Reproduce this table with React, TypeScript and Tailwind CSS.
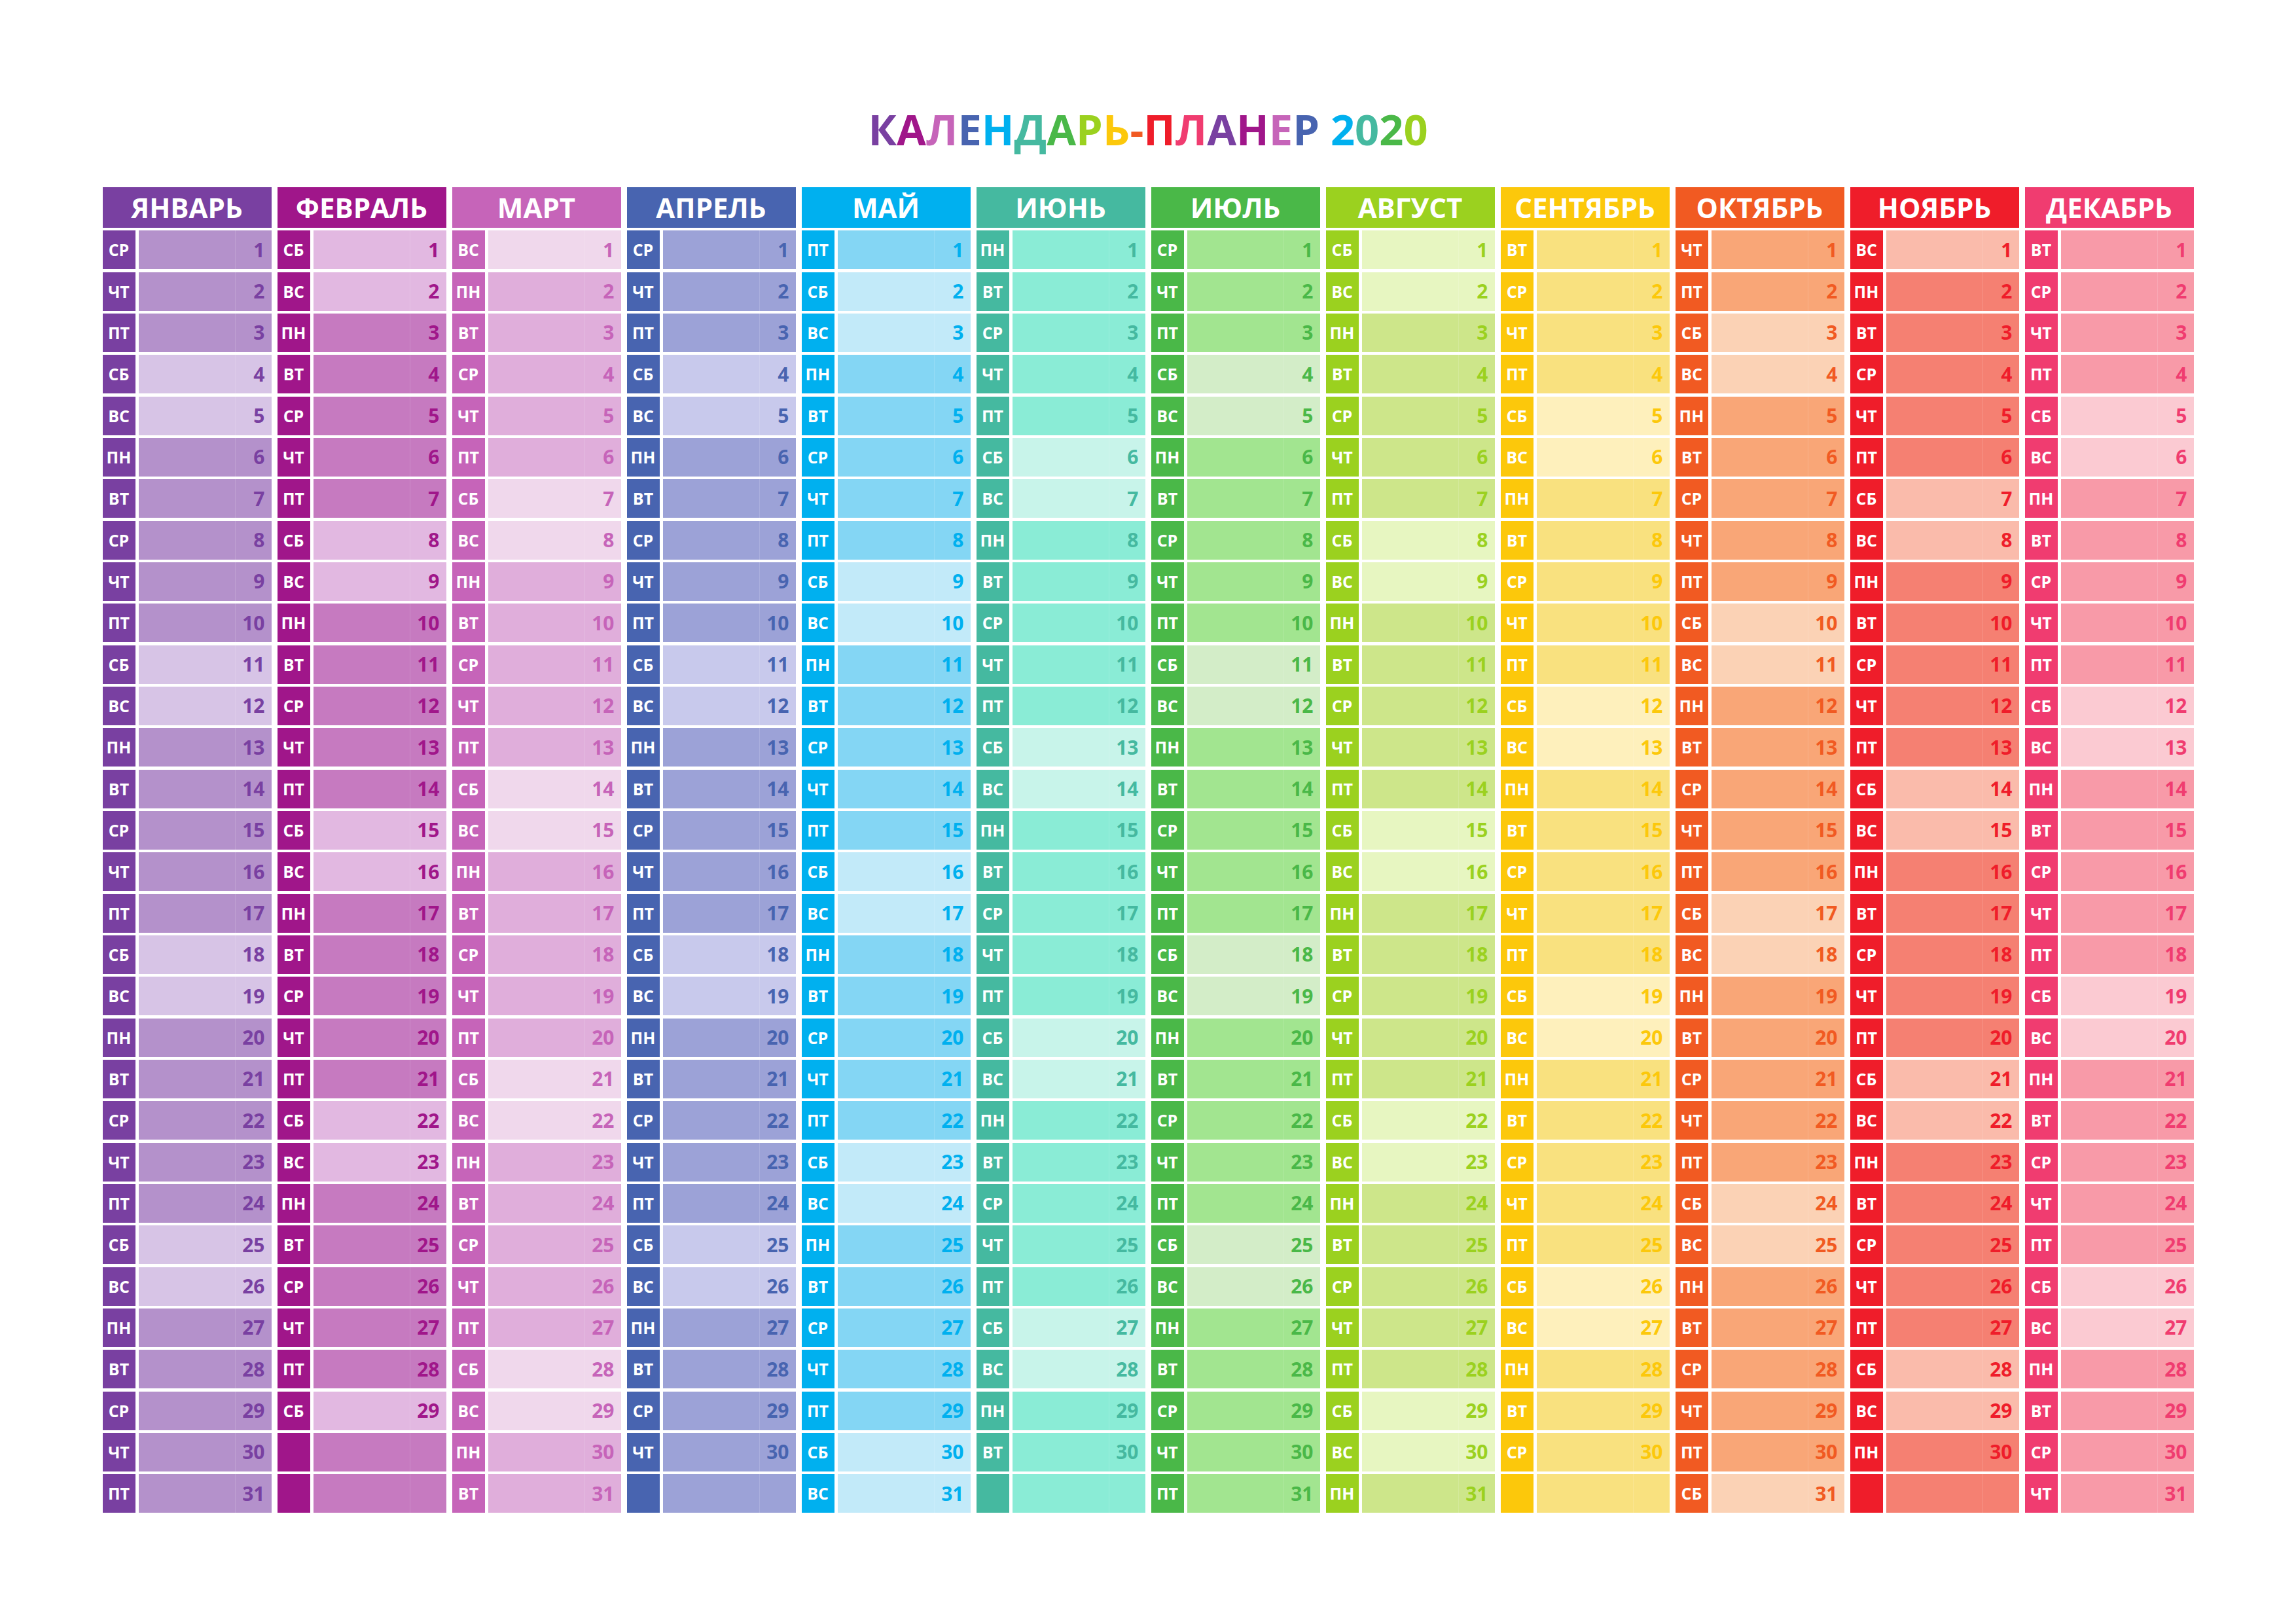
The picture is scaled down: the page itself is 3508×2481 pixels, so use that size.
import React from "react";

type MonthStyle = {
  name: string;
  dark: string;
  text: string;
  wk: string;
  we: string;
};

const MONTHS: MonthStyle[] = [
  { name: "ЯНВАРЬ", dark: "bg-[#7940a1]", text: "text-[#7940a1]", wk: "bg-[#b491cb]", we: "bg-[#d7c4e6]" },
  { name: "ФЕВРАЛЬ", dark: "bg-[#a0168a]", text: "text-[#a0168a]", wk: "bg-[#c67ac0]", we: "bg-[#e2b8e1]" },
  { name: "МАРТ", dark: "bg-[#c664b9]", text: "text-[#c664b9]", wk: "bg-[#e0aedb]", we: "bg-[#f0d8ec]" },
  { name: "АПРЕЛЬ", dark: "bg-[#4864b0]", text: "text-[#4864b0]", wk: "bg-[#9ca2d7]", we: "bg-[#c8c9ec]" },
  { name: "МАЙ", dark: "bg-[#00b0ef]", text: "text-[#00b0ef]", wk: "bg-[#84d6f4]", we: "bg-[#c2eaf9]" },
  { name: "ИЮНЬ", dark: "bg-[#45b9a0]", text: "text-[#45b9a0]", wk: "bg-[#8aecd6]", we: "bg-[#c8f4ea]" },
  { name: "ИЮЛЬ", dark: "bg-[#4ab848]", text: "text-[#4ab848]", wk: "bg-[#a2e590]", we: "bg-[#d3edc8]" },
  { name: "АВГУСТ", dark: "bg-[#9bd11f]", text: "text-[#9bd11f]", wk: "bg-[#cde68a]", we: "bg-[#e7f6c1]" },
  { name: "СЕНТЯБРЬ", dark: "bg-[#fcc80b]", text: "text-[#fcc80b]", wk: "bg-[#f9e17f]", we: "bg-[#fef0bc]" },
  { name: "ОКТЯБРЬ", dark: "bg-[#f15a22]", text: "text-[#f15a22]", wk: "bg-[#f9a677]", we: "bg-[#fbd2b5]" },
  { name: "НОЯБРЬ", dark: "bg-[#ef1d2a]", text: "text-[#ef1d2a]", wk: "bg-[#f58072]", we: "bg-[#fabbab]" },
  { name: "ДЕКАБРЬ", dark: "bg-[#f03c70]", text: "text-[#f03c70]", wk: "bg-[#f89aa8]", we: "bg-[#fbcad2]" },
];

const DAY_NAMES = ["ВС", "ПН", "ВТ", "СР", "ЧТ", "ПТ", "СБ"];

const TITLE: { ch: string; cls: string }[] = [
  { ch: "К", cls: "text-[#7940a1]" },
  { ch: "А", cls: "text-[#a0168a]" },
  { ch: "Л", cls: "text-[#c664b9]" },
  { ch: "Е", cls: "text-[#4864b0]" },
  { ch: "Н", cls: "text-[#00b0ef]" },
  { ch: "Д", cls: "text-[#45b9a0]" },
  { ch: "А", cls: "text-[#4ab848]" },
  { ch: "Р", cls: "text-[#9bd11f]" },
  { ch: "Ь", cls: "text-[#fcc80b]" },
  { ch: "-", cls: "text-[#f15a22]" },
  { ch: "П", cls: "text-[#ef1d2a]" },
  { ch: "Л", cls: "text-[#f03c70]" },
  { ch: "А", cls: "text-[#7940a1]" },
  { ch: "Н", cls: "text-[#a0168a]" },
  { ch: "Е", cls: "text-[#c664b9]" },
  { ch: "Р", cls: "text-[#4864b0]" },
  { ch: " ", cls: "" },
  { ch: "2", cls: "text-[#00b0ef]" },
  { ch: "0", cls: "text-[#45b9a0]" },
  { ch: "2", cls: "text-[#4ab848]" },
  { ch: "0", cls: "text-[#9bd11f]" },
];

function daysIn(month: number) {
  return new Date(2020, month + 1, 0).getDate();
}

function MonthColumn({ m, idx }: { m: MonthStyle; idx: number }) {
  const n = daysIn(idx);
  const rows = Array.from({ length: 31 }, (_, i) => i + 1);
  return (
    <div className="flex w-[258px] flex-col gap-[4.33px]">
      <div className={`flex h-[62px] items-center justify-center ${m.dark}`}>
        <span className="text-[42px] font-bold leading-none text-white">{m.name}</span>
      </div>
      {rows.map((d) => {
        const valid = d <= n;
        const dow = valid ? new Date(2020, idx, d).getDay() : -1;
        const weekend = dow === 0 || dow === 6;
        const cellBg = valid && weekend ? m.we : m.wk;
        return (
          <div key={d} className="flex h-[59px] gap-[5px]">
            <div className={`flex w-[50px] items-center justify-center ${m.dark}`}>
              <span className="text-[25px] font-bold leading-none text-white">
                {valid ? DAY_NAMES[dow] : ""}
              </span>
            </div>
            <div className={`flex flex-1 ${cellBg}`}>
              <div className="flex-1" />
              <div className="flex w-[56px] items-center justify-end border-l border-white/15 pr-[10px]">
                <span className={`text-[30px] font-bold leading-none ${m.text}`}>{valid ? d : ""}</span>
              </div>
            </div>
          </div>
        );
      })}
    </div>
  );
}

export default function App() {
  return (
    <div className="flex h-[2481px] w-[3508px] flex-col items-center bg-white pt-[165px] font-['Open_Sans','Noto_Sans',sans-serif]">
      <h1 className="text-[65px] font-bold leading-none whitespace-pre">
        {TITLE.map((t, i) => (
          <span key={i} className={t.cls}>
            {t.ch}
          </span>
        ))}
      </h1>
      <div className="mt-[56px] flex gap-[9px]">
        {MONTHS.map((m, i) => (
          <MonthColumn key={m.name} m={m} idx={i} />
        ))}
      </div>
    </div>
  );
}
